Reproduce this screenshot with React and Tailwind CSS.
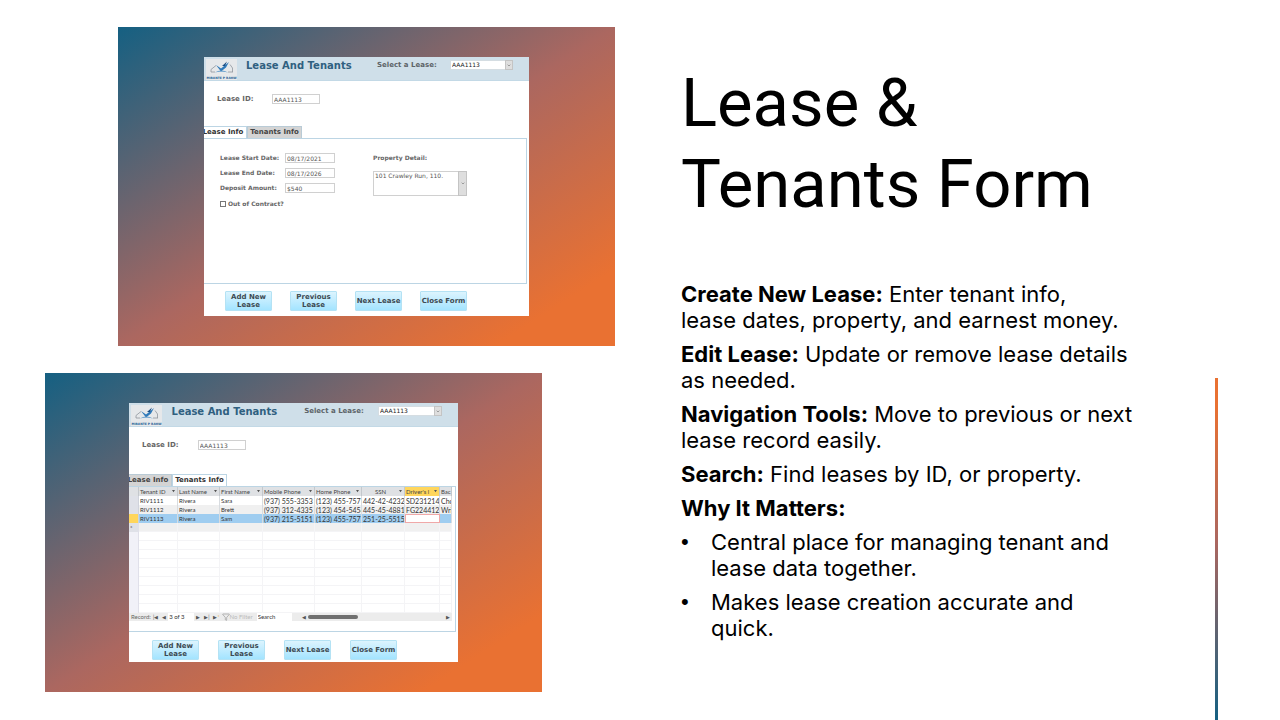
import { Filter } from "lucide-react";

const GRADIENT = "bg-[linear-gradient(to_bottom_right,#156082,#ab6760_50%,#e97132_88%)]";
const INPUT = "border border-[#d0d0d0] bg-white px-px text-[6px] leading-[7px] text-[#555]";

function Logo() {
  return (
    <svg viewBox="0 0 31 21" className="h-[21px] w-[31px]" role="img" aria-label="Company logo">
      <rect width="31" height="21" fill="#e6e8ea" />
      <path d="M5 13V10.500L10 6.500M24 5.500L26.500 9V13M5 13H9M22 13H27" fill="none" stroke="#8f969d" strokeWidth="0.800" />
      <path d="M10 6L15 9.500L23 3L20 8.500L15 12.500Z" fill="#2f79b9" />
      <path d="M16 7L21 2.500L19 7Z" fill="#1b4f86" />
      <path d="M9 13.500Q15 9.500 22 13.500Q15 11.500 9 13.500Z" fill="#4c8fc7" />
      <text x="15.500" y="20" textAnchor="middle" fontSize="3" fontWeight="700" fontFamily="DejaVu Sans, sans-serif" fill="#1f5f96" textRendering="geometricPrecision">MIRANTE P RAOW</text>
    </svg>
  );
}

function FormHeader({ id }) {
  return (
    <header className="grid h-6 grid-cols-[42fr_131fr_73fr_63fr_16fr] border-b border-[#c3d9e6] bg-[#cfdfe9]">
      <div className="pt-0.5 pl-0.5"><Logo /></div>
      <h2 className="pt-[3px] text-[10px] leading-3 font-bold whitespace-nowrap text-[#2f6080]">Lease And Tenants</h2>
      <label htmlFor={`${id}-select`} className="pt-1 text-[7px] leading-2 font-bold whitespace-nowrap text-[#5d6468]">Select a Lease:</label>
      <div className="relative mt-[3px] h-[10px]">
        <select id={`${id}-select`} className="block h-full w-full appearance-none border border-[#d5dde2] bg-white pl-px text-[6px] leading-2 text-[#222]">
          <option>AAA1113</option>
        </select>
        <Chevron className="absolute inset-y-0 right-0 w-2" />
      </div>
    </header>
  );
}

function Chevron({ className }) {
  return (
    <span className={`pointer-events-none flex items-center justify-center border border-[#c4c4c4] bg-[#dedede] ${className}`}>
      <svg viewBox="0 0 6 4" className="w-1 shrink-0"><path d="M1 1L3 3L5 1" fill="none" stroke="#777" /></svg>
    </span>
  );
}

function LeaseForm({ id, active, spacing, children }) {
  const tab = "h-3 border border-b-0 text-[7px] leading-[11px] font-bold whitespace-nowrap";
  const on = "border-[#bcd5e4] bg-white text-[#333]";
  const off = "border-[#b9cbd6] bg-[#d4d4d4] text-[#444]";
  return (
    <form className="overflow-hidden bg-white font-['DejaVu_Sans',sans-serif]" onSubmit={(e) => e.preventDefault()}>
      <FormHeader id={id} />
      <div className="mt-[13px] grid grid-cols-[68fr_48fr_209fr]">
        <label htmlFor={`${id}-lease`} className="pl-[13px] text-[7px] leading-[10px] font-bold whitespace-nowrap text-[#666]">Lease ID:</label>
        <input id={`${id}-lease`} defaultValue="AAA1113" className={`h-[10px] w-full min-w-0 ${INPUT}`} />
      </div>
      <div role="tablist" className={`flex ${spacing.tabs}`}>
        <button type="button" role="tab" aria-selected={active === 0} className={`${tab} w-[43px] border-l-0 ${active === 0 ? on : off}`}><span className="-ml-1">Lease Info</span></button>
        <button type="button" role="tab" aria-selected={active === 1} className={`${tab} w-[55px] ${active === 1 ? on : off}`}>Tenants Info</button>
      </div>
      <div className="mr-0.5 h-[146px] border border-l-0 border-[#bcd5e4]">{children}</div>
      <div className={`flex ${spacing.buttons}`}>
        {["Add New Lease", "Previous Lease", "Next Lease", "Close Form"].map((name) => (
          <button key={name} type="button" className="flex h-5 w-[47px] items-center justify-center rounded-[1px] border border-[#b4e2f4] bg-linear-to-b from-[#dcf4fe] to-[#a3e4ff] text-center text-[7px] leading-2 font-bold text-[#3d4a52]">
            <span className={name.length > 10 ? "w-9" : "whitespace-nowrap"}>{name}</span>
          </button>
        ))}
      </div>
    </form>
  );
}

function LeaseInfo() {
  const fields = [["start", "Lease Start Date:", "08/17/2021"], ["end", "Lease End Date:", "08/17/2026"], ["deposit", "Deposit Amount:", "$540"]];
  return (
    <div className="grid grid-cols-[115fr_38fr_94fr_59fr] pt-[14px] pl-4">
      <div className="flex flex-col gap-[5px] whitespace-nowrap text-[#666]">
        {fields.map(([id, label, value]) => (
          <div key={id} className="grid grid-cols-[65fr_50fr]">
            <label htmlFor={id} className="text-[6px] leading-[9px] font-bold">{label}</label>
            <input id={id} defaultValue={value} className={`h-[10px] w-full min-w-0 ${INPUT}`} />
          </div>
        ))}
        <label className="flex items-center gap-0.5 pt-0.5 text-[6px] leading-2 font-bold">
          <input type="checkbox" className="size-[6px] appearance-none border border-[#777] bg-white" />
          Out of Contract?
        </label>
      </div>
      <div />
      <div>
        <label htmlFor="property" className="block text-[6px] leading-[9px] font-bold whitespace-nowrap text-[#666]">Property Detail:</label>
        <div className="relative mt-[9px] h-[25px]">
          <textarea id="property" defaultValue="101 Crawley Run, 110." className={`block h-full w-full resize-none overflow-hidden ${INPUT}`} />
          <Chevron className="absolute inset-y-0 right-0 w-[9px]" />
        </div>
      </div>
    </div>
  );
}

const COLUMNS = ["Tenant ID", "Last Name", "First Name", "Mobile Phone", "Home Phone", "SSN", "Driver's l", "Bac"];
const TENANTS = [
  ["RIV1111", "Rivera", "Sara", "(937) 555-3353", "(123) 455-7577", "442-42-4232", "SD231214", "Cho"],
  ["RIV1112", "Rivera", "Brett", "(937) 312-4335", "(123) 454-5454", "445-45-4881", "FG224412", "Wri"],
  ["RIV1113", "Rivera", "Sam", "(937) 215-5151", "(123) 455-7577", "251-25-5515", "", ""],
];

function TenantsInfo() {
  const widths = ["w-[10px]", "w-[39px]", "w-[42px]", "w-[43px]", "w-[52px]", "w-[47px]", "w-[43px]", "w-[35px]", "w-[12px]"];
  const cell = "h-[9px] overflow-hidden border-r p-0 pl-px text-left leading-2 whitespace-nowrap";
  const nav = "px-0.5 text-[5px] leading-2 text-[#555]";
  return (
    <div className="mr-[3px] font-[Lato,sans-serif]">
      <table className="w-full table-fixed border-separate border-spacing-0 text-[7px] text-[#333]">
        <colgroup>{widths.map((w, i) => <col key={i} className={w} />)}</colgroup>
        <thead>
          <tr className="bg-[#dfe1e4] text-[6px] text-[#444]">
            <th className={`${cell} border-[#c4c8cc]`} />
            {COLUMNS.map((name, i) => (
              <th key={name} className={`${cell} border-[#c4c8cc] font-normal ${i === 6 ? "bg-[#ffd65c]" : ""}`}>
                <span className="flex items-center justify-between pr-0.5">
                  <span className={i === 5 ? "pl-3" : ""}>{name}</span>
                  {i < 7 && <svg viewBox="0 0 4 3" className="w-[3px]"><path d="M0 0H4L2 3Z" fill="#555" /></svg>}
                </span>
              </th>
            ))}
          </tr>
        </thead>
        <tbody>
          {TENANTS.map((row, r) => (
            <tr key={row[0]} className={r === 2 ? "bg-[#9fcdf0]" : r === 1 ? "bg-[#f0f0f0]" : "bg-white"}>
              <td className={`${cell} border-[#d0d3dc] ${r === 2 ? "bg-[#ffd65c]" : "bg-[#dfe1e8]"}`} />
              {row.map((value, c) => (
                <td key={c} className={`${cell} ${r === 2 && c === 6 ? "border border-[#f0a8a8] bg-white" : "border-[#d8dce0]"} ${c < 3 ? "text-[6px]" : ""}`}>{value}</td>
              ))}
            </tr>
          ))}
          {Array.from({ length: 10 }, (_, r) => (
            <tr key={r} className={r === 0 ? "bg-[#f0f0f0]" : ""}>
              <td className={`${cell} border-[#e0e0ea] text-center text-[6px] ${r === 0 ? "bg-[#dfe1e8]" : "bg-[#f1f1f8]"}`}>{r === 0 ? "*" : ""}</td>
              {COLUMNS.map((name) => <td key={name} className={`${cell} border-b border-[#f4f4f6]`} />)}
            </tr>
          ))}
        </tbody>
      </table>
      <div className="flex h-2 items-center overflow-hidden bg-[#ececec] whitespace-nowrap">
        <span className="pl-0.5 text-[6px] leading-2 text-[#666]">Record:</span>
        <button type="button" aria-label="First record" className={nav}>|◀</button>
        <button type="button" aria-label="Previous record" className={nav}>◀</button>
        <input aria-label="Current record" defaultValue="3 of 3" className="h-2 w-[26px] bg-white pl-px text-[6px] leading-2 text-[#333]" />
        <button type="button" aria-label="Next record" className={nav}>▶</button>
        <button type="button" aria-label="Last record" className={nav}>▶|</button>
        <button type="button" aria-label="New record" className={nav}>▶<span className="text-[#e8b050]">*</span></button>
        <button type="button" disabled className="flex items-center text-[6px] leading-2 text-[#bbb]"><Filter size={8} color="#999" />No Filter</button>
        <input aria-label="Search" defaultValue="Search" className="ml-1 h-2 w-[35px] bg-white pl-px text-[6px] leading-2 text-[#333]" />
        <div className="ml-2 flex grow items-center justify-between">
          <button type="button" aria-label="Scroll left" className={nav}>◀</button>
          <span className="h-1 w-[50px] rounded-full bg-[#707070]" />
          <span className="grow" />
          <button type="button" aria-label="Scroll right" className={nav}>▶</button>
        </div>
      </div>
    </div>
  );
}

const POINTS = [
  ["Create New Lease:", "Enter tenant info,", "lease dates, property, and earnest money."],
  ["Edit Lease:", "Update or remove lease details", "as needed."],
  ["Navigation Tools:", "Move to previous or next", "lease record easily."],
  ["Search:", "Find leases by ID, or property."],
  ["Why It Matters:"],
];

const FIRST_FORM = { tabs: "mt-[22px]", buttons: "gap-[18px] pt-[7px] pb-[5px] pl-[21px]" };
const SECOND_FORM = { tabs: "mt-6", buttons: "gap-[19px] pt-2 pb-0.5 pl-[23px]" };

export default function App() {
  return (
    <main className="flex min-h-screen bg-white text-black">
      <section className="flex w-[615px] shrink-0 flex-col gap-[27px] pt-[27px] pb-7">
        <div className={`ml-[118px] px-[86px] py-[30px] ${GRADIENT}`}>
          <LeaseForm id="info" active={0} spacing={FIRST_FORM}><LeaseInfo /></LeaseForm>
        </div>
        <div className={`mr-[73px] ml-[45px] px-[84px] py-[30px] ${GRADIENT}`}>
          <LeaseForm id="tenants" active={1} spacing={SECOND_FORM}><TenantsInfo /></LeaseForm>
        </div>
      </section>
      <article className="ml-[66px] min-w-0 flex-1 font-[Inter,sans-serif]">
        <h1 className="pt-[63px] font-[Roboto,sans-serif] text-[67px] leading-[81px]">Lease &amp;<br />Tenants Form</h1>
        <div className="flex flex-col gap-2 pt-14 text-[22px] leading-[26px]">
          {POINTS.map(([name, first, second]) => (
            <p key={name} className="whitespace-nowrap">
              <strong className="font-bold">{name}</strong>{first && ` ${first}`}
              {second && <span className="block">{second}</span>}
            </p>
          ))}
          <ul className="flex list-none flex-col gap-2">
            {["Central place for managing tenant and lease data together.", "Makes lease creation accurate and quick."].map((text) => (
              <li key={text} className="flex"><span className="w-[30px] shrink-0 font-['Liberation_Sans',sans-serif]">•</span><span>{text}</span></li>
            ))}
          </ul>
        </div>
      </article>
      <div className="mr-[62px] ml-[84px] flex w-[3px] shrink-0 flex-col pt-[378px]">
        <div className="grow bg-[linear-gradient(to_bottom,#e97132_8%,#ab6760_48%,#156082)]" />
      </div>
    </main>
  );
}
